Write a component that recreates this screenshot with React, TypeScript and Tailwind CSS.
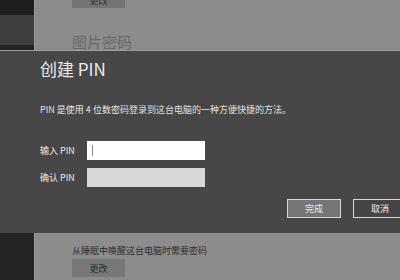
import React from 'react';

const font = { fontFamily: '"Noto Sans CJK SC", "Noto Sans", sans-serif' };

const App: React.FC = () => {
  return (
    <div className="relative w-[400px] h-[280px] overflow-hidden bg-[#8c8c8c]" style={font}>
      {/* Settings page behind the dialog */}
      <div className="flex h-full">
        <aside className="w-[35px] flex flex-col border-r border-[#9a9a9a]">
          <div className="h-[15px] bg-[#1f1f1f]" />
          <div className="h-[30px] bg-[#3e3e3e]" />
          <div className="flex-1 bg-[#242424]" />
        </aside>
        <main className="flex-1 flex flex-col justify-between pl-[37px]">
          <div className="flex flex-col">
            <div className="w-[53px] h-[18px] mt-[-10px] bg-[#747474] flex items-end justify-center pb-[3px] text-[9px] text-[#2a2a2a] leading-none">
              更改
            </div>
            <div className="mt-[25px] text-[15px] leading-[18px] text-[#686868]">图片密码</div>
          </div>
          <div className="flex flex-col pb-[3px]">
            <div className="text-[9px] leading-[12px] text-[#2c2c2c]">从睡眠中唤醒这台电脑时需要密码</div>
            <div className="mt-[2px] w-[53px] h-[18px] bg-[#787878] flex items-center justify-center text-[9px] text-[#2a2a2a] leading-none">
              更改
            </div>
          </div>
        </main>
      </div>

      {/* Create PIN dialog */}
      <div className="absolute left-0 right-0 top-[50px] h-[183px] bg-[#474747] border-t border-[#9e9e9e] flex flex-col pl-[40px] text-[#ececec]">
        <div className="mt-[6px] text-[17px] leading-[24px]">创建 PIN</div>
        <div className="mt-[22px] text-[9px] leading-[14px] text-[#e2e2e2]">
          PIN 是使用 4 位数密码登录到这台电脑的一种方便快捷的方法。
        </div>
        <div className="mt-[24px] flex items-center">
          <span className="w-[47px] text-[9px] leading-[12px]">输入 PIN</span>
          <div className="w-[118px] h-[19px] bg-white flex items-center pl-[5px]">
            <div className="w-px h-[11px] bg-[#8a8a8a]" />
          </div>
        </div>
        <div className="mt-[8px] flex items-center">
          <span className="w-[47px] text-[9px] leading-[12px]">确认 PIN</span>
          <div className="w-[118px] h-[19px] bg-[#d8d8d8]" />
        </div>
        <div className="mt-[12px] flex gap-[12px] pl-[247px]">
          <div className="w-[54px] h-[19px] shrink-0 bg-[#767676] border border-[#d8d8d8] flex items-center justify-center text-[9px] leading-none">
            完成
          </div>
          <div className="w-[54px] h-[19px] shrink-0 bg-[#454545] border border-[#d8d8d8] flex items-center justify-center text-[9px] leading-none">
            取消
          </div>
        </div>
      </div>
    </div>
  );
};

export default App;
